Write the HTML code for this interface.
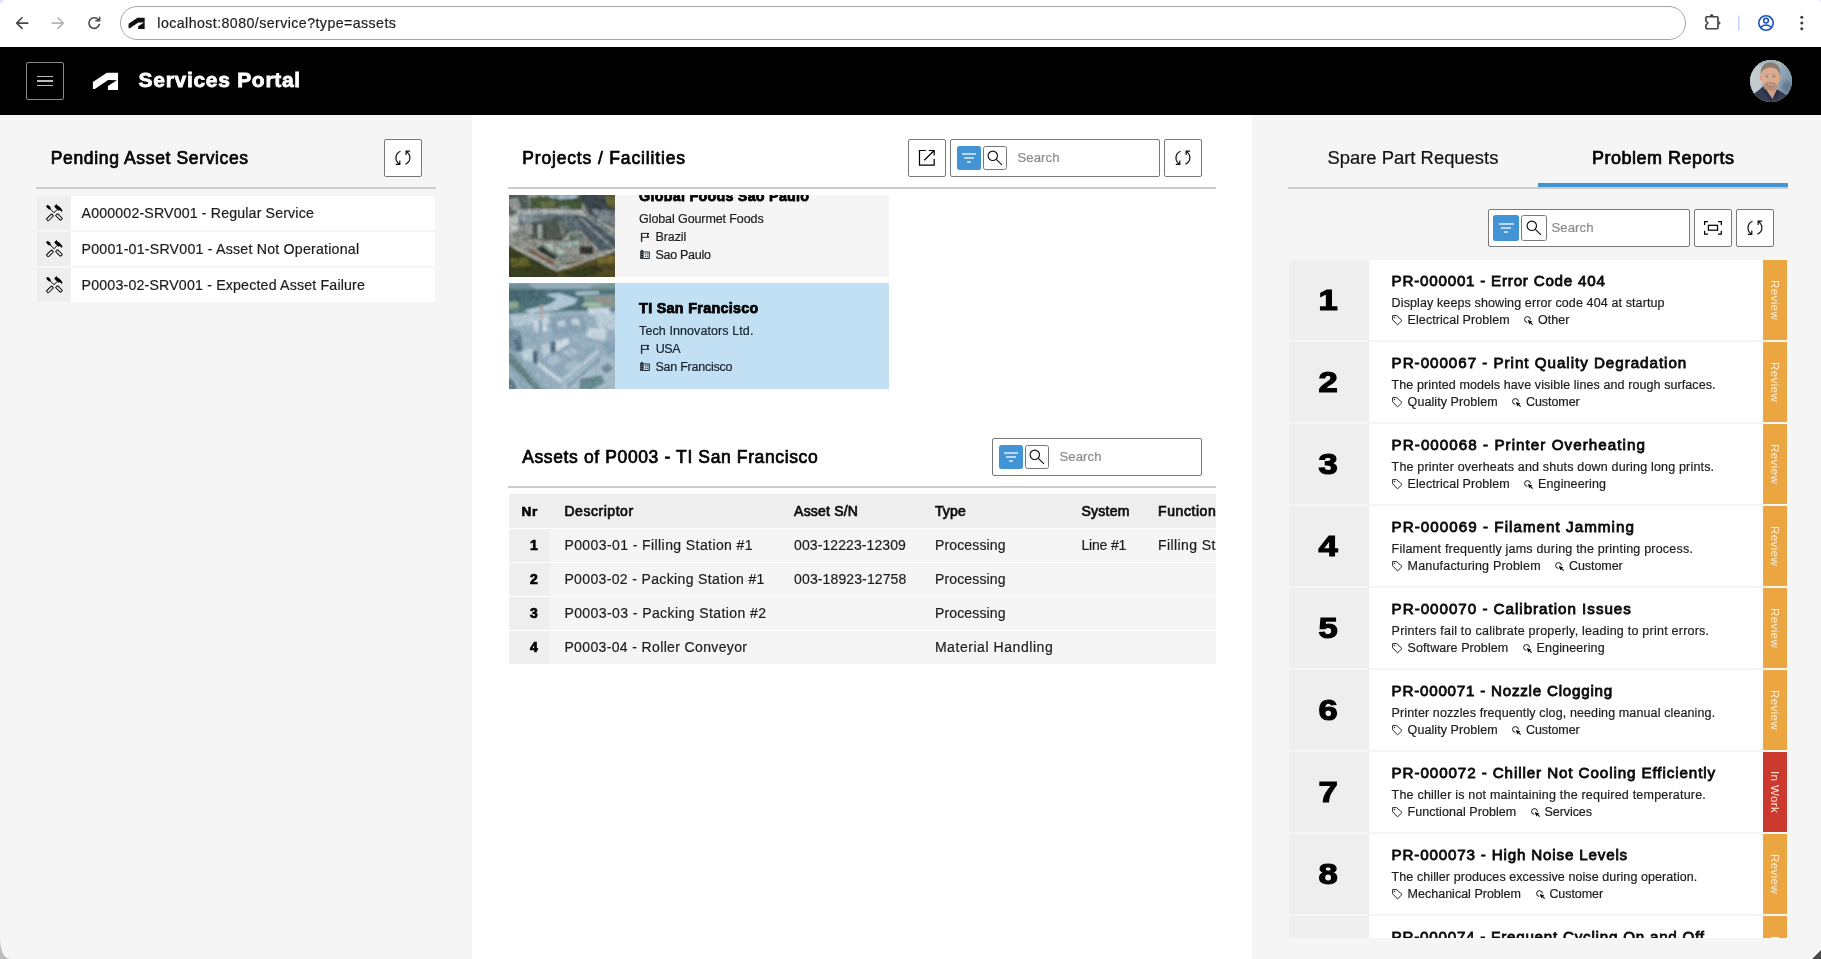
<!DOCTYPE html>
<html lang="en">
<head>
<meta charset="utf-8">
<title>Services Portal</title>
<style>
*{box-sizing:border-box;margin:0;padding:0}
html,body{width:1821px;height:959px;overflow:hidden;background:#f5f5f5;font-family:"Liberation Sans",sans-serif;color:#111}
.abs{position:absolute}
.t{position:absolute;white-space:nowrap}
.clip{position:absolute;left:0;top:0;width:1821px;height:959px}
#chrome{position:absolute;left:0;top:0;width:1821px;height:47px;background:#fff}
#urlbar{position:absolute;left:120px;top:6px;width:1566px;height:34px;border:1px solid #a6a6a6;border-radius:17px;background:#fff}
#hdr{position:absolute;left:0;top:47px;width:1821px;height:68px;background:#000}
#burger{position:absolute;left:26px;top:62px;width:38px;height:38px;border:1px solid #8a8a8a;border-radius:2px}
#burger i{position:absolute;left:10px;width:16px;height:1.400px;background:#bcbcbc}
#left{position:absolute;left:0;top:115px;width:472px;height:844px;background:#f5f5f5}
#mid{position:absolute;left:472px;top:115px;width:780px;height:844px;background:#fff}
#right{position:absolute;left:1252px;top:115px;width:569px;height:844px;background:#f5f5f5}
.sep{position:absolute;height:2px;background:#cbcbcb}
.btn{position:absolute;width:38px;height:38px;border:1px solid #787878;border-radius:2px;background:#fff}
.btn svg{position:absolute;left:-1px;top:-1px}
.sbox{position:absolute;height:38px;border:1px solid #787878;border-radius:2px;background:#fff}
.fb{position:absolute;background:#4394d5;border-radius:2.500px}
.fb i{position:absolute;height:1.600px;background:#b9d7ef}
.mb{position:absolute;background:#fff;border:1px solid #777;border-radius:2.500px}
.mb svg{position:absolute;left:-1px;top:-1px}
.lrow{position:absolute;left:37px;width:398px;height:34px;background:#fff}
.lrow b{position:absolute;left:0;top:0;width:34px;height:34px;background:#eee}
.lrow svg{position:absolute;left:8.800px;top:8px}
.vt{writing-mode:vertical-rl;text-align:center;font-size:11.500px;line-height:24px;color:#fdf0dc;letter-spacing:.4px}
</style>
</head>
<body>
<div id="root" style="position:absolute;left:0;top:0;width:1821px;height:959px;will-change:transform">
<!-- browser chrome -->
<div id="chrome">
  <svg class="abs" style="left:0;top:0" width="120" height="46" viewBox="0 0 120 46" fill="none" stroke-linecap="round" stroke-linejoin="round">
    <path d="M27.800 23.100H16.800M22 17.800l-5.300 5.300 5.300 5.300" stroke="#474747" stroke-width="1.600"/>
    <path d="M52.200 23.100H63.200M58 17.800l5.300 5.300-5.300 5.300" stroke="#b4b4b4" stroke-width="1.600"/>
    <path d="M98.600 20a5.300 5.300 0 1 0 .7 4.600" stroke="#474747" stroke-width="1.600"/>
    <path d="M99.600 17.200v3.600h-3.600" stroke="#474747" stroke-width="1.600"/>
  </svg>
  <div id="urlbar"></div>
  <svg class="abs" style="left:128.400px;top:16.600px" width="17.600" height="12.800" viewBox="92 71.500 27.500 20"><path d="M92.900 82.100 106.800 72.800H118.050V90.100H107.900V86L117 80.200 108.200 80.100 94.800 89.100H92.900Z" fill="#111"/></svg>
  <svg class="abs" style="left:1696px;top:6px" width="125" height="34" viewBox="0 0 125 34" fill="none">
    <path d="M10.850 10.750H21.050a.9.9 0 0 1 .9.9V21.850a.9.9 0 0 1-.9.9H10.850a.9.9 0 0 1-.9-.9V19L11.900 17 9.950 15V11.650a.9.9 0 0 1 .9-.9z" stroke="#444" stroke-width="1.700" stroke-linejoin="round"/><path d="M13.600 10.200Q15.700 6 17.800 10.200ZM22.700 15Q26.400 17 22.700 19Z" fill="#444"/>
    <path d="M42.800 9.500v15" stroke="#c6d4f5" stroke-width="1.600"/>
    <circle cx="70" cy="17" r="7.200" stroke="#1a4fc4" stroke-width="1.600"/>
    <circle cx="70" cy="14.600" r="2.400" stroke="#1a4fc4" stroke-width="1.500"/>
    <path d="M64.800 21.600c1.400-2 3.100-2.700 5.200-2.700s3.800.7 5.200 2.700" stroke="#1a4fc4" stroke-width="1.500"/>
    <circle cx="105.800" cy="11.200" r="1.500" fill="#3c3c3c"/><circle cx="105.800" cy="17" r="1.500" fill="#3c3c3c"/><circle cx="105.800" cy="22.800" r="1.500" fill="#3c3c3c"/>
  </svg>
</div>

<!-- app header -->
<div id="hdr"></div>
<div id="burger"><i style="top:12.500px"></i><i style="top:17.300px"></i><i style="top:22.100px"></i></div>
<svg class="abs" style="left:90px;top:70px" width="32" height="24" viewBox="90 70 32 24"><path d="M92.900 82.100 106.800 72.800H118.050V90.100H107.900V86L117 80.200 108.200 80.100 94.800 89.100H92.900Z" fill="#fff"/></svg>
<div id="avatar" class="abs" style="left:1750px;top:60px;width:42px;height:42px;border-radius:50%;overflow:hidden;background:#9fb0b8">
  <svg width="42" height="42" viewBox="0 0 42 42">
    <defs>
      <linearGradient id="avbg" x1="0" y1="0" x2="1" y2=".25"><stop offset="0" stop-color="#c4cccf"/><stop offset=".35" stop-color="#c2cbce"/><stop offset=".7" stop-color="#96abb9"/><stop offset="1" stop-color="#8299ab"/></linearGradient>
      <filter id="avblur" x="-10%" y="-10%" width="120%" height="120%"><feGaussianBlur stdDeviation=".65"/></filter>
      <filter id="avblur2" x="-30%" y="-30%" width="160%" height="160%"><feGaussianBlur stdDeviation="2.200"/></filter>
    </defs>
    <rect width="42" height="42" fill="url(#avbg)"/>
    <ellipse cx="21" cy="1" rx="20" ry="5" fill="#a3b8ba" filter="url(#avblur2)"/>
    <ellipse cx="37" cy="27" rx="5.500" ry="6.500" fill="#63798f" filter="url(#avblur2)"/>
    <g filter="url(#avblur)">
      <path d="M2 35.500C6 32 10 29.500 13.500 26L22 38 27 29.500C31 32 35.500 34 39 36.500L42 43H0Z" fill="#343c52"/>
      <path d="M13.800 25.500 22.300 39 27.200 29 26 22H14Z" fill="#cf9f85"/>
      <path d="M13.500 26 22 38.500 20 40 11 28.500ZM27 29.500 23.500 37 26 39 30.500 31.500Z" fill="#2b3246"/>
      <ellipse cx="10.900" cy="17.800" rx="1.300" ry="2.500" fill="#cc9a80"/><ellipse cx="29.800" cy="17.800" rx="1.300" ry="2.500" fill="#cc9a80"/>
      <ellipse cx="20.300" cy="17.600" rx="9.200" ry="12.300" fill="#dcab8e"/>
      <path d="M10.800 15C10 6.500 15 2.300 20.500 2.300 26 2.300 31 6.500 29.900 15 28.600 9.800 25.500 7.600 20.500 7.600 15.500 7.600 12.300 9.800 10.800 15Z" fill="#8a7b6e"/>
      <ellipse cx="20.300" cy="26.400" rx="7.200" ry="4.400" fill="#b58b75" opacity=".85"/>
      <path d="M16.600 23.600Q20.500 25 24.800 23.400 23.500 26.600 20.700 26.700 17.800 26.600 16.600 23.600Z" fill="#8d5f52"/>
      <path d="M17.600 24.200Q20.600 25.100 23.800 24.100L23.300 25.200Q20.600 26 18.100 25.200Z" fill="#f3e9e4"/>
      <ellipse cx="16.900" cy="16.700" rx="1.300" ry=".7" fill="#6a7488"/><ellipse cx="24" cy="16.700" rx="1.300" ry=".7" fill="#6a7488"/>
      <path d="M14.800 15.200Q17 14.200 19 15.200M22 15.200Q24 14.200 26.200 15.200" stroke="#a58672" stroke-width=".7" fill="none"/>
    </g>
  </svg>
</div>

<!-- panels -->
<div id="left"></div>
<div id="mid"></div>
<div id="right"></div>

<!-- shared icon defs -->
<svg width="0" height="0" style="position:absolute">
  <defs>
    <g id="i-refresh" fill="none" stroke="#111" stroke-width="1.200"><path d="M16.500 12.300C13.500 13.600 12 16 12 19c0 2.500 1.400 4.700 3.600 6.200M11.800 25.400h4v-3.800M21.400 25.300c3-1.300 4.500-3.700 4.500-6.700 0-2.500-1.400-4.700-3.600-6.200M26.100 12.100h-4v3.900"/></g>
    <g id="i-mag" fill="none" stroke="#111" stroke-width="1.150"><circle cx="9.800" cy="9.800" r="4.700"/><path d="M13.300 13.400 19 18.800"/></g>
    <g id="i-tools">
      <g transform="rotate(45 2.600 3.300)"><ellipse cx="2.600" cy="3.300" rx="2.700" ry="1.350" fill="#000"/></g>
      <path d="M4 4.700 7.900 8.600M11.200 5.500 7.600 9.100" stroke="#000" stroke-width="1" fill="none"/>
      <g transform="rotate(-45 3.900 13.400)"><rect x="0.200" y="12" width="7.400" height="2.800" rx=".7" fill="none" stroke="#000" stroke-width="1"/></g>
      <g transform="rotate(45 13 13)"><rect x="9.500" y="11.600" width="7" height="2.800" rx=".7" fill="none" stroke="#000" stroke-width="1"/></g>
      <path d="M8.200 2.300 10.700 0 11.300 1.500 13.600 2.700 16.400 6.100 16 8 13.700 6.100 12.400 6.700 11.100 5.400 9.500 3.900Z" fill="#000"/>
    </g>
    <g id="i-flag" fill="none" stroke="#1c252c"><path d="M1.600 .9V9.900" stroke-width="1.400"/><path d="M1.600 1.400H8.700L7.500 3.400 8.700 5.300H1.600" stroke-width="1" stroke-linejoin="miter"/><path d="M7.200 1.400H8.700L7.600 3.400 8.700 5.300H7.200" fill="#1c252c" stroke-width=".6"/></g>
    <g id="i-bldg"><path d="M.2 10V2.300L2 .6 3.600 2.300V10Z" fill="#1c252c"/><path d="M3.600 3H9.300V9.500H3.600" fill="none" stroke="#1c252c" stroke-width="1"/><path d="M5 5h1.300M7 5h1.300M5 7.200h1.300M7 7.200h1.300" stroke="#1c252c" stroke-width="1.100"/><path d="M1.900 3v6.500" stroke="#dfe7ec" stroke-width=".7" stroke-dasharray="1 1"/></g>
  </defs>
</svg>

<!-- LEFT -->
<div class="btn" style="left:384px;top:139px"><svg width="38" height="38"><use href="#i-refresh"/></svg></div>
<div class="sep" style="left:36px;top:187px;width:400px"></div>
<div class="lrow" style="top:196px"><b></b><svg width="17" height="17" viewBox="0 0 17 17"><use href="#i-tools"/></svg></div>
<div class="lrow" style="top:232px"><b></b><svg width="17" height="17" viewBox="0 0 17 17"><use href="#i-tools"/></svg></div>
<div class="lrow" style="top:268px"><b></b><svg width="17" height="17" viewBox="0 0 17 17"><use href="#i-tools"/></svg></div>

<!-- MID -->
<div class="btn" style="left:908px;top:139px"><svg width="38" height="38" fill="none" stroke="#000" stroke-width="1.200"><path d="M17.800 11.500H11.500V26.200H26.200V19.900M20.800 11.500H26.200V16.600M26.200 11.500 16.200 21.300"/></svg></div>
<div class="sbox" style="left:950px;top:139px;width:210px"></div>
<div class="fb" style="left:957px;top:146px;width:24px;height:24px"><i style="left:5px;top:7.400px;width:14px"></i><i style="left:7.100px;top:11.300px;width:9.900px"></i><i style="left:10.100px;top:15.100px;width:3.700px"></i></div>
<div class="mb" style="left:983px;top:146px;width:24px;height:24px"><svg width="24" height="24"><use href="#i-mag"/></svg></div>
<div class="btn" style="left:1164px;top:139px"><svg width="38" height="38"><use href="#i-refresh"/></svg></div>
<div class="sep" style="left:508px;top:187px;width:708px"></div>

<div class="clip" style="clip-path:inset(195px 0 0 0)">
  <!-- tile 1 -->
  <div class="abs" style="left:509px;top:171px;width:380px;height:106px;background:#f5f5f5"></div>
  <div class="abs" id="img1" style="left:509px;top:171px;width:106px;height:106px;overflow:hidden"><svg width="106" height="106" viewBox="0 0 106 106">
<defs><filter id="b1" x="-5%" y="-5%" width="110%" height="110%"><feGaussianBlur stdDeviation=".8"/></filter>
<filter id="n1" x="0" y="0" width="100%" height="100%"><feTurbulence type="fractalNoise" baseFrequency=".18" numOctaves="2" seed="3" result="n"/><feColorMatrix in="n" type="matrix" values="0 0 0 0 0  0 0 0 0 0  0 0 0 0 0  1.2 1.2 1.2 0 -1.450"/></filter></defs>
<rect width="106" height="106" fill="#979a93"/>
<g filter="url(#b1)">
<path d="M-2 20H32L31 36 12 40-2 44Z" fill="#5a6662"/>
<path d="M18 24 29 24 30 34 22 35Z" fill="#b6b6b1"/>
<path d="M0 28 8 27 13 38 2 40Z" fill="#9ea29f"/>
<path d="M20 26H74L72 39 24 41Z" fill="#4c5b3e"/>
<path d="M30 32 46 30 48 36 32 37Z" fill="#6c784c"/>
<ellipse cx="55" cy="25.800" rx="14" ry="2.400" fill="#a3c3d5"/>
<ellipse cx="55" cy="36.500" rx="5" ry="1.100" fill="#90a8b2"/>
<path d="M68 22H108V56L94 52 80 42Z" fill="#3f4c51"/>
<path d="M82 38 108 40V55L92 51Z" fill="#7c898f"/>
<path d="M95.500 24 108 25V38L99 36Z" fill="#6b6a3a"/>
<path d="M8 39 40 37.500 73 39 80 46 8 47Z" fill="#b1b7b5"/>
<path d="M-2 46 9 45 9 60-2 61Z" fill="#c3c7c5"/>
<path d="M8 44 46 42.500 47 52 10 53Z" fill="#7f9098"/>
<path d="M14 44 16 52M22 44 23 52M33 43 34 51" stroke="#b9c3c6" stroke-width="1.400" fill="none"/>
<path d="M28 44 69 43 72 60 40 60Z" fill="#64747a"/>
<path d="M68 45 82 45 108 66V78L92 80 74 62Z" fill="#53626a"/>
<path d="M71 47 104 77M79 46 108 68M89 49 108 61" stroke="#b6bfc0" stroke-width="1.100" fill="none"/>
<path d="M20 52 50 48 61 60 52 70 22 68Z" fill="#565c58"/>
<rect x="29" y="53.500" width="4" height="13.500" fill="#a7b5b0"/><rect x="21" y="53.500" width="2.800" height="9.500" fill="#a9b5b2"/>
<path d="M51 50 54 66M57 51 55 64" stroke="#a3a8a3" stroke-width="1" fill="none"/>
<path d="M10 58 20 56 22 68 12 66Z" fill="#8b8f88"/>
<path d="M60 62 72 62 76 70 62 72Z" fill="#6e7a76"/>
<path d="M27.500 78 36 73 50 82 46 89Z" fill="#2f3533"/>
<path d="M34.500 74 42 71 57.500 81V86.500L52 88 34.500 77Z" fill="#82978b"/>
<path d="M34.500 74 42 71 57.500 81 51 84Z" fill="#afbdb3"/>
<path d="M59 70 69 69.500 70 75 60 76Z" fill="#a7bfb6"/>
<path d="M50.500 70 57 70 57.500 75.500 51 75.500Z" fill="#8fa69b"/>
<path d="M70.500 76 84 75.500 84 83 71 83Z" fill="#393935"/>
<path d="M19 80 22 79 46 92 44 94Z" fill="#7b5637"/>
<path d="M56 92 76 88 77 90 57 94Z" fill="#6b5a44"/>
<path d="M-2 74 10 80 47 100V108H-2Z" fill="#3a4223"/>
<path d="M1 87 18 86 22 95 3 96Z" fill="#66662f"/>
<path d="M46 108 48 100 108 80V108Z" fill="#574f27"/>
<path d="M52 102 84 94 96 100 70 108Z" fill="#384020"/>
<path d="M87 85 106 84 106 92 90 92Z" fill="#7c6f34"/>
<path d="M-2 71.500 14 81 47 98.600 62 95 108 78" stroke="#b5b7af" stroke-width="2.300" fill="none"/>
</g>
<rect width="106" height="106" filter="url(#n1)" fill="#000" opacity=".22"/>
</svg></div>
  <!-- tile 2 -->
  <div class="abs" style="left:509px;top:283px;width:380px;height:106px;background:#c2e0f3"></div>
  <div class="abs" id="img2" style="left:509px;top:283px;width:106px;height:106px;overflow:hidden"><svg width="106" height="106" viewBox="0 0 106 106">
<defs><filter id="b2" x="-5%" y="-5%" width="110%" height="110%"><feGaussianBlur stdDeviation=".8"/></filter>
<filter id="n2" x="0" y="0" width="100%" height="100%"><feTurbulence type="fractalNoise" baseFrequency=".22" numOctaves="2" seed="8" result="n"/><feColorMatrix in="n" type="matrix" values="0 0 0 0 .9  0 0 0 0 .94  0 0 0 0 .97  1.2 1.2 1.2 0 -1.550"/></filter>
<filter id="n3" x="0" y="0" width="100%" height="100%"><feTurbulence type="fractalNoise" baseFrequency=".2" numOctaves="2" seed="21" result="n"/><feColorMatrix in="n" type="matrix" values="0 0 0 0 .22  0 0 0 0 .35  0 0 0 0 .45  1.2 1.2 1.2 0 -1.500"/></filter></defs>
<rect width="106" height="106" fill="#93abbc"/>
<g filter="url(#b2)">
<rect x="-2" y="-2" width="110" height="9" fill="#94adbb"/>
<path d="M-2 1 18 0 27 6-2 8Z" fill="#6f8d96"/><path d="M80 3 108-1V8L86 8Z" fill="#7a9a9a"/>
<path d="M-2 6H108V30L60 30-2 32Z" fill="#4a6e74"/>
<path d="M-2 8 30 7 38 14 10 20-2 20Z" fill="#40646a"/>
<path d="M-2 19 9 18.500 10 25-2 26Z" fill="#8aa88c"/>
<path d="M36 11.500 50 10 68.500 16 66 20.500 48 27 20 30.500 16 27 40 21.500 48 16Z" fill="#b5cad7"/>
<path d="M66 8.500 90 8 90 11 68 12.500Z" fill="#a8bfcc"/>
<path d="M74 12 108 11V26L78 26Z" fill="#7d9590"/>
<path d="M86 14 104 14.500 104 21 88 20Z" fill="#94908a"/>
<path d="M75.500 19.500 92.700 20 92 23.500 72 23Z" fill="#a6c4a4"/>
<path d="M-2 31 60 28 108 28V108H-2Z" fill="#95adbd"/>
<path d="M2 32 40 30 44 41 4 43Z" fill="#b3c6d2"/>
<path d="M79 25 100 24.500 102 31 80 32Z" fill="#cbd9e3"/>
<path d="M85 32 108 31V46L90 47Z" fill="#bccdd8"/>
<path d="M76 44 98 47 96 58 78 54Z" fill="#c6d5df"/>
<path d="M31 22 34 22 34 37 31 37Z" fill="#b09a9a"/>
<path d="M25 36 38 35 38.500 48 25 49Z" fill="#c9d6df"/>
<path d="M30 37 33 37 33 49 30 49Z" fill="#7d96a8"/>
<path d="M40 34 72 32 80 48 44 55Z" fill="#869fb1"/>
<path d="M48 38 56 37 57 43 49 44Z" fill="#b9cad5"/><path d="M62 36 70 36 71 42 63 42Z" fill="#c2d1db"/>
<path d="M-2 44 12 48 14 68-2 70Z" fill="#6b8799"/>
<path d="M5 56 12 54 13.500 67 7 69Z" fill="#4e6a7d"/>
<path d="M14 48 30 50 30 60 16 60Z" fill="#8da5b6"/>
<path d="M46.800 58 60 55.500 60.500 68 47 70.500Z" fill="#d3dfe7"/>
<path d="M40.700 59.500 46.800 58 47 70.500 41 70Z" fill="#4f6b7f"/>
<path d="M33 62 41 60 41.500 72 34 74Z" fill="#bfcfd9"/>
<path d="M13 68 24 65.500 28.600 68 28.600 80 14 77Z" fill="#c1d0da"/>
<path d="M23.800 68 28.600 67 29 82 24 80Z" fill="#3f5c70"/>
<path d="M28.600 78.500 60 61 89 66.300 52.200 96Z" fill="#8ea6b7"/>
<path d="M36 78 46 72 54 76 44 83ZM52 70 62 65 72 68 62 74ZM54 84 64 77 72 80 62 88Z" fill="#a9bdca"/>
<path d="M28.600 78.500 52.200 96 89 66.300 89.500 70 52.200 100.500 28.600 82.500Z" fill="#cddae3"/>
<path d="M52.200 96 89 66.300 89.500 70 52.200 100.500Z" fill="#b4c6d2"/>
<path d="M-2 64 8 70 40 108H-2Z" fill="#8ba3b2"/>
<path d="M-2 70 3 71 34 108 27 108-2 78Z" fill="#5f7d80"/>
<path d="M-2 84 12 108" stroke="#a9bcc8" stroke-width="1.500" fill="none"/>
<path d="M54 102 90 72 108 76V108H48Z" fill="#a5b9c6"/>
<path d="M58 104 92 75" stroke="#7d97a7" stroke-width="2.600" fill="none"/>
<path d="M92 84 100 80 104 86 96 91Z" fill="#6a8494"/>
<path d="M94 60 106 58 106 70 98 72Z" fill="#7f9db3"/>
<path d="M71 96 92 92 96 100 80 108 70 106Z" fill="#5f8288"/>
<path d="M-2 96 4 96 8 108H-2Z" fill="#4f6f78"/>
</g>
<rect y="26" width="106" height="80" filter="url(#n2)" opacity=".16"/>
<rect y="6" width="106" height="100" filter="url(#n3)" opacity=".3"/>
</svg></div>
  <svg class="abs" style="left:640px;top:232.300px" width="10" height="11" viewBox="0 0 10 11"><use href="#i-flag"/></svg>
  <svg class="abs" style="left:640px;top:249.400px" width="10" height="11" viewBox="0 0 10 11"><use href="#i-bldg"/></svg>
  <svg class="abs" style="left:640px;top:344px" width="10" height="11" viewBox="0 0 10 11"><use href="#i-flag"/></svg>
  <svg class="abs" style="left:640px;top:361.200px" width="10" height="11" viewBox="0 0 10 11"><use href="#i-bldg"/></svg>
<div class="t" style="left:639.1px;top:187.00px;font-size:14.3px;line-height:19px;font-weight:bold;letter-spacing:0.265px;color:#000;-webkit-text-stroke:.75px #000;">Global Foods Sao Paulo</div>
<div class="t" style="left:639.1px;top:211.00px;font-size:12.5px;line-height:16px;letter-spacing:-0.098px;color:#1c1c1c;-webkit-text-stroke:.2px #1c1c1c;">Global Gourmet Foods</div>
<div class="t" style="left:655.5px;top:229.00px;font-size:12.5px;line-height:16px;letter-spacing:-0.093px;color:#1c1c1c;-webkit-text-stroke:.2px #1c1c1c;">Brazil</div>
<div class="t" style="left:655.5px;top:247.00px;font-size:12.5px;line-height:16px;letter-spacing:-0.286px;color:#1c1c1c;-webkit-text-stroke:.2px #1c1c1c;">Sao Paulo</div>
<div class="t" style="left:639.1px;top:299.00px;font-size:14.3px;line-height:19px;font-weight:bold;letter-spacing:0.319px;color:#000;-webkit-text-stroke:.75px #000;">TI San Francisco</div>
<div class="t" style="left:639.1px;top:323.00px;font-size:12.5px;line-height:16px;letter-spacing:0.091px;color:#16222b;-webkit-text-stroke:.2px #16222b;">Tech Innovators Ltd.</div>
<div class="t" style="left:655.8px;top:341.00px;font-size:12.5px;line-height:16px;letter-spacing:-0.500px;color:#16222b;-webkit-text-stroke:.2px #16222b;">USA</div>
<div class="t" style="left:655.5px;top:359.00px;font-size:12.5px;line-height:16px;letter-spacing:-0.251px;color:#16222b;-webkit-text-stroke:.2px #16222b;">San Francisco</div>
</div>

<div class="sbox" style="left:992px;top:438px;width:210px"></div>
<div class="fb" style="left:999px;top:445px;width:24px;height:24px"><i style="left:5px;top:7.400px;width:14px"></i><i style="left:7.100px;top:11.300px;width:9.900px"></i><i style="left:10.100px;top:15.100px;width:3.700px"></i></div>
<div class="mb" style="left:1025px;top:445px;width:24px;height:24px"><svg width="24" height="24"><use href="#i-mag"/></svg></div>
<div class="sep" style="left:508px;top:486px;width:708px"></div>

<div class="clip" style="clip-path:inset(0 605px 0 0)">
  <div class="abs" style="left:509px;top:494px;width:707px;height:34px;background:#eee"></div>
  <div class="abs" style="left:509px;top:529px;width:707px;height:33px;background:#f5f5f5"></div>
  <div class="abs" style="left:509px;top:563px;width:707px;height:33px;background:#f5f5f5"></div>
  <div class="abs" style="left:509px;top:597px;width:707px;height:33px;background:#f5f5f5"></div>
  <div class="abs" style="left:509px;top:631px;width:707px;height:33px;background:#f5f5f5"></div>
  <div class="abs" style="left:509px;top:529px;width:41px;height:33px;background:#eee"></div>
  <div class="abs" style="left:509px;top:563px;width:41px;height:33px;background:#eee"></div>
  <div class="abs" style="left:509px;top:597px;width:41px;height:33px;background:#eee"></div>
  <div class="abs" style="left:509px;top:631px;width:41px;height:33px;background:#eee"></div>
<div class="t" style="left:521.4px;top:503.00px;font-size:13.6px;line-height:18px;font-weight:bold;letter-spacing:0.691px;color:#000;-webkit-text-stroke:.6px #000;">Nr</div>
<div class="t" style="left:564.4px;top:502.00px;font-size:14px;line-height:18px;letter-spacing:0.545px;color:#0c0c0c;-webkit-text-stroke:.7px #0c0c0c;">Descriptor</div>
<div class="t" style="left:794.1px;top:502.00px;font-size:14px;line-height:18px;letter-spacing:0.194px;color:#0c0c0c;-webkit-text-stroke:.7px #0c0c0c;">Asset S/N</div>
<div class="t" style="left:934.9px;top:502.00px;font-size:14px;line-height:18px;letter-spacing:0.147px;color:#0c0c0c;-webkit-text-stroke:.7px #0c0c0c;">Type</div>
<div class="t" style="left:1081.4px;top:502.00px;font-size:14px;line-height:18px;letter-spacing:0.263px;color:#0c0c0c;-webkit-text-stroke:.7px #0c0c0c;">System</div>
<div class="t" style="left:1158.1px;top:502.00px;font-size:14px;line-height:18px;letter-spacing:0.557px;color:#0c0c0c;-webkit-text-stroke:.7px #0c0c0c;">Function</div>
<div class="t" style="right:1283.2px;top:536.00px;font-size:14px;line-height:18px;font-weight:bold;color:#000;-webkit-text-stroke:.7px #000;">1</div>
<div class="t" style="left:564.4px;top:536.00px;font-size:14px;line-height:18px;letter-spacing:0.412px;color:#1c1c1c;-webkit-text-stroke:.2px #1c1c1c;">P0003-01 - Filling Station #1</div>
<div class="t" style="left:794.1px;top:536.00px;font-size:14px;line-height:18px;letter-spacing:0.090px;color:#1c1c1c;-webkit-text-stroke:.2px #1c1c1c;">003-12223-12309</div>
<div class="t" style="left:934.9px;top:536.00px;font-size:14px;line-height:18px;letter-spacing:0.159px;color:#1c1c1c;-webkit-text-stroke:.2px #1c1c1c;">Processing</div>
<div class="t" style="left:1081.4px;top:536.00px;font-size:14px;line-height:18px;letter-spacing:-0.156px;color:#1c1c1c;-webkit-text-stroke:.2px #1c1c1c;">Line #1</div>
<div class="t" style="left:1158.1px;top:536.00px;font-size:14px;line-height:18px;letter-spacing:0.400px;color:#1c1c1c;-webkit-text-stroke:.2px #1c1c1c;">Filling Station</div>
<div class="t" style="right:1283.2px;top:570.00px;font-size:14px;line-height:18px;font-weight:bold;color:#000;-webkit-text-stroke:.7px #000;">2</div>
<div class="t" style="left:564.4px;top:570.00px;font-size:14px;line-height:18px;letter-spacing:0.360px;color:#1c1c1c;-webkit-text-stroke:.2px #1c1c1c;">P0003-02 - Packing Station #1</div>
<div class="t" style="left:794.1px;top:570.00px;font-size:14px;line-height:18px;letter-spacing:0.118px;color:#1c1c1c;-webkit-text-stroke:.2px #1c1c1c;">003-18923-12758</div>
<div class="t" style="left:934.9px;top:570.00px;font-size:14px;line-height:18px;letter-spacing:0.159px;color:#1c1c1c;-webkit-text-stroke:.2px #1c1c1c;">Processing</div>
<div class="t" style="right:1283.2px;top:604.00px;font-size:14px;line-height:18px;font-weight:bold;color:#000;-webkit-text-stroke:.7px #000;">3</div>
<div class="t" style="left:564.4px;top:604.00px;font-size:14px;line-height:18px;letter-spacing:0.418px;color:#1c1c1c;-webkit-text-stroke:.2px #1c1c1c;">P0003-03 - Packing Station #2</div>
<div class="t" style="left:934.9px;top:604.00px;font-size:14px;line-height:18px;letter-spacing:0.159px;color:#1c1c1c;-webkit-text-stroke:.2px #1c1c1c;">Processing</div>
<div class="t" style="right:1283.2px;top:638.00px;font-size:14px;line-height:18px;font-weight:bold;color:#000;-webkit-text-stroke:.7px #000;">4</div>
<div class="t" style="left:564.4px;top:638.00px;font-size:14px;line-height:18px;letter-spacing:0.363px;color:#1c1c1c;-webkit-text-stroke:.2px #1c1c1c;">P0003-04 - Roller Conveyor</div>
<div class="t" style="left:934.9px;top:638.00px;font-size:14px;line-height:18px;letter-spacing:0.553px;color:#1c1c1c;-webkit-text-stroke:.2px #1c1c1c;">Material Handling</div>
</div>

<!-- RIGHT -->
<div class="sep" style="left:1288px;top:187px;width:500px"></div>
<div class="abs" style="left:1538px;top:183px;width:250px;height:4px;background:#4394d5"></div>
<div class="sbox" style="left:1488px;top:209px;width:202px"></div>
<div class="fb" style="left:1493px;top:215px;width:26px;height:26px"><i style="left:5.500px;top:8px;width:15px"></i><i style="left:7.800px;top:12.200px;width:10.400px"></i><i style="left:11px;top:16.400px;width:4px"></i></div>
<div class="mb" style="left:1521px;top:215px;width:26px;height:26px"><svg width="26" height="26" viewBox="-1 -1 26 26"><use href="#i-mag"/></svg></div>
<div class="btn" style="left:1694px;top:209px"><svg width="38" height="38" fill="none" stroke="#000" stroke-width="1.250"><path d="M10.600 16V12.700H14M24 12.700H27.300V16M10.600 21.700V25H14M24 25H27.300V21.700"/><rect x="14.400" y="16.300" width="9.100" height="4.900"/></svg></div>
<div class="btn" style="left:1736px;top:209px"><svg width="38" height="38"><use href="#i-refresh"/></svg></div>

<div class="clip" style="clip-path:inset(260px 0 21px 0)">
<div class="abs" style="left:1289px;top:260px;width:80px;height:80px;background:#eee"></div>
<div class="abs" style="left:1369px;top:260px;width:394px;height:80px;background:#fff"></div>
<div class="abs" style="left:1763px;top:260px;width:24px;height:80px;background:#eba641"></div>
<svg class="abs" style="left:1391.6px;top:314.6px" width="11" height="11" viewBox="0 0 11 11" fill="none" stroke="#1c1c1c" stroke-width=".95" stroke-linejoin="round"><path d="M.6.6H4.700L10 5.500 5.600 9.900.6 4.800Z"/><circle cx="2.600" cy="2.600" r=".35" fill="#1c1c1c"/></svg>
<svg class="abs" style="left:1524.4px;top:316.3px" width="10" height="10" viewBox="0 0 10 10" fill="none"><path d="M3.300 6.400A2.900 2.900 0 1 1 6.400 3.600" stroke="#111" stroke-width="1"/><path d="M3.700 3.900 8.400 5.400 7 6.200 9 8.300 8.200 9 6.200 7 5.400 8.500Z" fill="#000"/></svg>
<div class="t vt" style="left:1763px;top:260px;width:24px;height:80px">Review</div>
<div class="abs" style="left:1289px;top:342px;width:80px;height:80px;background:#eee"></div>
<div class="abs" style="left:1369px;top:342px;width:394px;height:80px;background:#fff"></div>
<div class="abs" style="left:1763px;top:342px;width:24px;height:80px;background:#eba641"></div>
<svg class="abs" style="left:1391.6px;top:396.6px" width="11" height="11" viewBox="0 0 11 11" fill="none" stroke="#1c1c1c" stroke-width=".95" stroke-linejoin="round"><path d="M.6.6H4.700L10 5.500 5.600 9.900.6 4.800Z"/><circle cx="2.600" cy="2.600" r=".35" fill="#1c1c1c"/></svg>
<svg class="abs" style="left:1512.4px;top:398.3px" width="10" height="10" viewBox="0 0 10 10" fill="none"><path d="M3.300 6.400A2.900 2.900 0 1 1 6.400 3.600" stroke="#111" stroke-width="1"/><path d="M3.700 3.900 8.400 5.400 7 6.200 9 8.300 8.200 9 6.200 7 5.400 8.500Z" fill="#000"/></svg>
<div class="t vt" style="left:1763px;top:342px;width:24px;height:80px">Review</div>
<div class="abs" style="left:1289px;top:424px;width:80px;height:80px;background:#eee"></div>
<div class="abs" style="left:1369px;top:424px;width:394px;height:80px;background:#fff"></div>
<div class="abs" style="left:1763px;top:424px;width:24px;height:80px;background:#eba641"></div>
<svg class="abs" style="left:1391.6px;top:478.6px" width="11" height="11" viewBox="0 0 11 11" fill="none" stroke="#1c1c1c" stroke-width=".95" stroke-linejoin="round"><path d="M.6.6H4.700L10 5.500 5.600 9.900.6 4.800Z"/><circle cx="2.600" cy="2.600" r=".35" fill="#1c1c1c"/></svg>
<svg class="abs" style="left:1524.4px;top:480.3px" width="10" height="10" viewBox="0 0 10 10" fill="none"><path d="M3.300 6.400A2.900 2.900 0 1 1 6.400 3.600" stroke="#111" stroke-width="1"/><path d="M3.700 3.900 8.400 5.400 7 6.200 9 8.300 8.200 9 6.200 7 5.400 8.500Z" fill="#000"/></svg>
<div class="t vt" style="left:1763px;top:424px;width:24px;height:80px">Review</div>
<div class="abs" style="left:1289px;top:506px;width:80px;height:80px;background:#eee"></div>
<div class="abs" style="left:1369px;top:506px;width:394px;height:80px;background:#fff"></div>
<div class="abs" style="left:1763px;top:506px;width:24px;height:80px;background:#eba641"></div>
<svg class="abs" style="left:1391.6px;top:560.6px" width="11" height="11" viewBox="0 0 11 11" fill="none" stroke="#1c1c1c" stroke-width=".95" stroke-linejoin="round"><path d="M.6.6H4.700L10 5.500 5.600 9.900.6 4.800Z"/><circle cx="2.600" cy="2.600" r=".35" fill="#1c1c1c"/></svg>
<svg class="abs" style="left:1555.4px;top:562.3px" width="10" height="10" viewBox="0 0 10 10" fill="none"><path d="M3.300 6.400A2.900 2.900 0 1 1 6.400 3.600" stroke="#111" stroke-width="1"/><path d="M3.700 3.900 8.400 5.400 7 6.200 9 8.300 8.200 9 6.200 7 5.400 8.500Z" fill="#000"/></svg>
<div class="t vt" style="left:1763px;top:506px;width:24px;height:80px">Review</div>
<div class="abs" style="left:1289px;top:588px;width:80px;height:80px;background:#eee"></div>
<div class="abs" style="left:1369px;top:588px;width:394px;height:80px;background:#fff"></div>
<div class="abs" style="left:1763px;top:588px;width:24px;height:80px;background:#eba641"></div>
<svg class="abs" style="left:1391.6px;top:642.6px" width="11" height="11" viewBox="0 0 11 11" fill="none" stroke="#1c1c1c" stroke-width=".95" stroke-linejoin="round"><path d="M.6.6H4.700L10 5.500 5.600 9.900.6 4.800Z"/><circle cx="2.600" cy="2.600" r=".35" fill="#1c1c1c"/></svg>
<svg class="abs" style="left:1523.0px;top:644.3px" width="10" height="10" viewBox="0 0 10 10" fill="none"><path d="M3.300 6.400A2.900 2.900 0 1 1 6.400 3.600" stroke="#111" stroke-width="1"/><path d="M3.700 3.900 8.400 5.400 7 6.200 9 8.300 8.200 9 6.200 7 5.400 8.500Z" fill="#000"/></svg>
<div class="t vt" style="left:1763px;top:588px;width:24px;height:80px">Review</div>
<div class="abs" style="left:1289px;top:670px;width:80px;height:80px;background:#eee"></div>
<div class="abs" style="left:1369px;top:670px;width:394px;height:80px;background:#fff"></div>
<div class="abs" style="left:1763px;top:670px;width:24px;height:80px;background:#eba641"></div>
<svg class="abs" style="left:1391.6px;top:724.6px" width="11" height="11" viewBox="0 0 11 11" fill="none" stroke="#1c1c1c" stroke-width=".95" stroke-linejoin="round"><path d="M.6.6H4.700L10 5.500 5.600 9.900.6 4.800Z"/><circle cx="2.600" cy="2.600" r=".35" fill="#1c1c1c"/></svg>
<svg class="abs" style="left:1512.4px;top:726.3px" width="10" height="10" viewBox="0 0 10 10" fill="none"><path d="M3.300 6.400A2.900 2.900 0 1 1 6.400 3.600" stroke="#111" stroke-width="1"/><path d="M3.700 3.900 8.400 5.400 7 6.200 9 8.300 8.200 9 6.200 7 5.400 8.500Z" fill="#000"/></svg>
<div class="t vt" style="left:1763px;top:670px;width:24px;height:80px">Review</div>
<div class="abs" style="left:1289px;top:752px;width:80px;height:80px;background:#eee"></div>
<div class="abs" style="left:1369px;top:752px;width:394px;height:80px;background:#fff"></div>
<div class="abs" style="left:1763px;top:752px;width:24px;height:80px;background:#cc392e"></div>
<svg class="abs" style="left:1391.6px;top:806.6px" width="11" height="11" viewBox="0 0 11 11" fill="none" stroke="#1c1c1c" stroke-width=".95" stroke-linejoin="round"><path d="M.6.6H4.700L10 5.500 5.600 9.900.6 4.800Z"/><circle cx="2.600" cy="2.600" r=".35" fill="#1c1c1c"/></svg>
<svg class="abs" style="left:1531.0px;top:808.3px" width="10" height="10" viewBox="0 0 10 10" fill="none"><path d="M3.300 6.400A2.900 2.900 0 1 1 6.400 3.600" stroke="#111" stroke-width="1"/><path d="M3.700 3.900 8.400 5.400 7 6.200 9 8.300 8.200 9 6.200 7 5.400 8.500Z" fill="#000"/></svg>
<div class="t vt" style="left:1763px;top:752px;width:24px;height:80px">In Work</div>
<div class="abs" style="left:1289px;top:834px;width:80px;height:80px;background:#eee"></div>
<div class="abs" style="left:1369px;top:834px;width:394px;height:80px;background:#fff"></div>
<div class="abs" style="left:1763px;top:834px;width:24px;height:80px;background:#eba641"></div>
<svg class="abs" style="left:1391.6px;top:888.6px" width="11" height="11" viewBox="0 0 11 11" fill="none" stroke="#1c1c1c" stroke-width=".95" stroke-linejoin="round"><path d="M.6.6H4.700L10 5.500 5.600 9.900.6 4.800Z"/><circle cx="2.600" cy="2.600" r=".35" fill="#1c1c1c"/></svg>
<svg class="abs" style="left:1535.8px;top:890.3px" width="10" height="10" viewBox="0 0 10 10" fill="none"><path d="M3.300 6.400A2.900 2.900 0 1 1 6.400 3.600" stroke="#111" stroke-width="1"/><path d="M3.700 3.900 8.400 5.400 7 6.200 9 8.300 8.200 9 6.200 7 5.400 8.500Z" fill="#000"/></svg>
<div class="t vt" style="left:1763px;top:834px;width:24px;height:80px">Review</div>
<div class="abs" style="left:1289px;top:916px;width:80px;height:80px;background:#eee"></div>
<div class="abs" style="left:1369px;top:916px;width:394px;height:80px;background:#fff"></div>
<div class="abs" style="left:1763px;top:916px;width:24px;height:80px;background:#eba641"></div>
<svg class="abs" style="left:1391.6px;top:970.6px" width="11" height="11" viewBox="0 0 11 11" fill="none" stroke="#1c1c1c" stroke-width=".95" stroke-linejoin="round"><path d="M.6.6H4.700L10 5.500 5.600 9.900.6 4.800Z"/><circle cx="2.600" cy="2.600" r=".35" fill="#1c1c1c"/></svg>
<svg class="abs" style="left:1531.0px;top:972.3px" width="10" height="10" viewBox="0 0 10 10" fill="none"><path d="M3.300 6.400A2.900 2.900 0 1 1 6.400 3.600" stroke="#111" stroke-width="1"/><path d="M3.700 3.900 8.400 5.400 7 6.200 9 8.300 8.200 9 6.200 7 5.400 8.500Z" fill="#000"/></svg>
<div class="t vt" style="left:1763px;top:916px;width:24px;height:80px">Review</div>
<div class="t" style="top:280.00px;font-size:29.8px;line-height:39px;font-weight:bold;color:#000;-webkit-text-stroke:1.200px #000;width:80px;text-align:center;left:1288.300px;transform:scaleX(1.160);">1</div>
<div class="t" style="left:1391.6px;top:271.00px;font-size:15.2px;line-height:20px;letter-spacing:0.765px;color:#0a0a0a;-webkit-text-stroke:.8px #0a0a0a;">PR-000001 - Error Code 404</div>
<div class="t" style="left:1391.6px;top:295.00px;font-size:12.5px;line-height:16px;letter-spacing:0.119px;color:#1c1c1c;-webkit-text-stroke:.2px #1c1c1c;">Display keeps showing error code 404 at startup</div>
<div class="t" style="left:1407.6px;top:312.00px;font-size:12.5px;line-height:16px;letter-spacing:0.074px;color:#1c1c1c;-webkit-text-stroke:.2px #1c1c1c;">Electrical Problem</div>
<div class="t" style="left:1538.0px;top:312.00px;font-size:12.5px;line-height:16px;letter-spacing:0.034px;color:#1c1c1c;-webkit-text-stroke:.2px #1c1c1c;">Other</div>
<div class="t" style="top:362.00px;font-size:29.8px;line-height:39px;font-weight:bold;color:#000;-webkit-text-stroke:1.200px #000;width:80px;text-align:center;left:1288.300px;transform:scaleX(1.160);">2</div>
<div class="t" style="left:1391.6px;top:353.00px;font-size:15.2px;line-height:20px;letter-spacing:0.963px;color:#0a0a0a;-webkit-text-stroke:.8px #0a0a0a;">PR-000067 - Print Quality Degradation</div>
<div class="t" style="left:1391.6px;top:377.00px;font-size:12.5px;line-height:16px;letter-spacing:0.090px;color:#1c1c1c;-webkit-text-stroke:.2px #1c1c1c;">The printed models have visible lines and rough surfaces.</div>
<div class="t" style="left:1407.6px;top:394.00px;font-size:12.5px;line-height:16px;letter-spacing:0.076px;color:#1c1c1c;-webkit-text-stroke:.2px #1c1c1c;">Quality Problem</div>
<div class="t" style="left:1526.0px;top:394.00px;font-size:12.5px;line-height:16px;letter-spacing:-0.070px;color:#1c1c1c;-webkit-text-stroke:.2px #1c1c1c;">Customer</div>
<div class="t" style="top:444.00px;font-size:29.8px;line-height:39px;font-weight:bold;color:#000;-webkit-text-stroke:1.200px #000;width:80px;text-align:center;left:1288.300px;transform:scaleX(1.160);">3</div>
<div class="t" style="left:1391.6px;top:435.00px;font-size:15.2px;line-height:20px;letter-spacing:1.042px;color:#0a0a0a;-webkit-text-stroke:.8px #0a0a0a;">PR-000068 - Printer Overheating</div>
<div class="t" style="left:1391.6px;top:459.00px;font-size:12.5px;line-height:16px;letter-spacing:0.178px;color:#1c1c1c;-webkit-text-stroke:.2px #1c1c1c;">The printer overheats and shuts down during long prints.</div>
<div class="t" style="left:1407.6px;top:476.00px;font-size:12.5px;line-height:16px;letter-spacing:0.074px;color:#1c1c1c;-webkit-text-stroke:.2px #1c1c1c;">Electrical Problem</div>
<div class="t" style="left:1538.0px;top:476.00px;font-size:12.5px;line-height:16px;letter-spacing:0.128px;color:#1c1c1c;-webkit-text-stroke:.2px #1c1c1c;">Engineering</div>
<div class="t" style="top:526.00px;font-size:29.8px;line-height:39px;font-weight:bold;color:#000;-webkit-text-stroke:1.200px #000;width:80px;text-align:center;left:1288.300px;transform:scaleX(1.160);">4</div>
<div class="t" style="left:1391.6px;top:517.00px;font-size:15.2px;line-height:20px;letter-spacing:1.033px;color:#0a0a0a;-webkit-text-stroke:.8px #0a0a0a;">PR-000069 - Filament Jamming</div>
<div class="t" style="left:1391.6px;top:541.00px;font-size:12.5px;line-height:16px;letter-spacing:0.209px;color:#1c1c1c;-webkit-text-stroke:.2px #1c1c1c;">Filament frequently jams during the printing process.</div>
<div class="t" style="left:1407.6px;top:558.00px;font-size:12.5px;line-height:16px;letter-spacing:0.188px;color:#1c1c1c;-webkit-text-stroke:.2px #1c1c1c;">Manufacturing Problem</div>
<div class="t" style="left:1569.0px;top:558.00px;font-size:12.5px;line-height:16px;letter-spacing:-0.070px;color:#1c1c1c;-webkit-text-stroke:.2px #1c1c1c;">Customer</div>
<div class="t" style="top:608.00px;font-size:29.8px;line-height:39px;font-weight:bold;color:#000;-webkit-text-stroke:1.200px #000;width:80px;text-align:center;left:1288.300px;transform:scaleX(1.160);">5</div>
<div class="t" style="left:1391.6px;top:599.00px;font-size:15.2px;line-height:20px;letter-spacing:0.974px;color:#0a0a0a;-webkit-text-stroke:.8px #0a0a0a;">PR-000070 - Calibration Issues</div>
<div class="t" style="left:1391.6px;top:623.00px;font-size:12.5px;line-height:16px;letter-spacing:0.235px;color:#1c1c1c;-webkit-text-stroke:.2px #1c1c1c;">Printers fail to calibrate properly, leading to print errors.</div>
<div class="t" style="left:1407.6px;top:640.00px;font-size:12.5px;line-height:16px;letter-spacing:0.083px;color:#1c1c1c;-webkit-text-stroke:.2px #1c1c1c;">Software Problem</div>
<div class="t" style="left:1536.6px;top:640.00px;font-size:12.5px;line-height:16px;letter-spacing:0.128px;color:#1c1c1c;-webkit-text-stroke:.2px #1c1c1c;">Engineering</div>
<div class="t" style="top:690.00px;font-size:29.8px;line-height:39px;font-weight:bold;color:#000;-webkit-text-stroke:1.200px #000;width:80px;text-align:center;left:1288.300px;transform:scaleX(1.160);">6</div>
<div class="t" style="left:1391.6px;top:681.00px;font-size:15.2px;line-height:20px;letter-spacing:0.756px;color:#0a0a0a;-webkit-text-stroke:.8px #0a0a0a;">PR-000071 - Nozzle Clogging</div>
<div class="t" style="left:1391.6px;top:705.00px;font-size:12.5px;line-height:16px;letter-spacing:0.119px;color:#1c1c1c;-webkit-text-stroke:.2px #1c1c1c;">Printer nozzles frequently clog, needing manual cleaning.</div>
<div class="t" style="left:1407.6px;top:722.00px;font-size:12.5px;line-height:16px;letter-spacing:0.076px;color:#1c1c1c;-webkit-text-stroke:.2px #1c1c1c;">Quality Problem</div>
<div class="t" style="left:1526.0px;top:722.00px;font-size:12.5px;line-height:16px;letter-spacing:-0.070px;color:#1c1c1c;-webkit-text-stroke:.2px #1c1c1c;">Customer</div>
<div class="t" style="top:772.00px;font-size:29.8px;line-height:39px;font-weight:bold;color:#000;-webkit-text-stroke:1.200px #000;width:80px;text-align:center;left:1288.300px;transform:scaleX(1.160);">7</div>
<div class="t" style="left:1391.6px;top:763.00px;font-size:15.2px;line-height:20px;letter-spacing:0.898px;color:#0a0a0a;-webkit-text-stroke:.8px #0a0a0a;">PR-000072 - Chiller Not Cooling Efficiently</div>
<div class="t" style="left:1391.6px;top:787.00px;font-size:12.5px;line-height:16px;letter-spacing:0.205px;color:#1c1c1c;-webkit-text-stroke:.2px #1c1c1c;">The chiller is not maintaining the required temperature.</div>
<div class="t" style="left:1407.6px;top:804.00px;font-size:12.5px;line-height:16px;letter-spacing:0.053px;color:#1c1c1c;-webkit-text-stroke:.2px #1c1c1c;">Functional Problem</div>
<div class="t" style="left:1544.6px;top:804.00px;font-size:12.5px;line-height:16px;letter-spacing:-0.077px;color:#1c1c1c;-webkit-text-stroke:.2px #1c1c1c;">Services</div>
<div class="t" style="top:854.00px;font-size:29.8px;line-height:39px;font-weight:bold;color:#000;-webkit-text-stroke:1.200px #000;width:80px;text-align:center;left:1288.300px;transform:scaleX(1.160);">8</div>
<div class="t" style="left:1391.6px;top:845.00px;font-size:15.2px;line-height:20px;letter-spacing:0.816px;color:#0a0a0a;-webkit-text-stroke:.8px #0a0a0a;">PR-000073 - High Noise Levels</div>
<div class="t" style="left:1391.6px;top:869.00px;font-size:12.5px;line-height:16px;letter-spacing:0.078px;color:#1c1c1c;-webkit-text-stroke:.2px #1c1c1c;">The chiller produces excessive noise during operation.</div>
<div class="t" style="left:1407.6px;top:886.00px;font-size:12.5px;line-height:16px;letter-spacing:0.009px;color:#1c1c1c;-webkit-text-stroke:.2px #1c1c1c;">Mechanical Problem</div>
<div class="t" style="left:1549.4px;top:886.00px;font-size:12.5px;line-height:16px;letter-spacing:-0.070px;color:#1c1c1c;-webkit-text-stroke:.2px #1c1c1c;">Customer</div>
<div class="t" style="top:936.00px;font-size:29.8px;line-height:39px;font-weight:bold;color:#000;-webkit-text-stroke:1.200px #000;width:80px;text-align:center;left:1288.300px;transform:scaleX(1.160);">9</div>
<div class="t" style="left:1391.6px;top:927.00px;font-size:15.2px;line-height:20px;letter-spacing:0.766px;color:#0a0a0a;-webkit-text-stroke:.8px #0a0a0a;">PR-000074 - Frequent Cycling On and Off</div>
<div class="t" style="left:1391.6px;top:951.00px;font-size:12.5px;line-height:16px;letter-spacing:0.450px;color:#1c1c1c;-webkit-text-stroke:.2px #1c1c1c;">The chiller turns on and off too frequently.</div>
<div class="t" style="left:1407.6px;top:968.00px;font-size:12.5px;line-height:16px;letter-spacing:0.053px;color:#1c1c1c;-webkit-text-stroke:.2px #1c1c1c;">Functional Problem</div>
<div class="t" style="left:1544.6px;top:968.00px;font-size:12.5px;line-height:16px;letter-spacing:-0.070px;color:#1c1c1c;-webkit-text-stroke:.2px #1c1c1c;">Customer</div>
</div>

<div class="t" style="left:157.3px;top:14.00px;font-size:14.2px;line-height:18px;letter-spacing:0.431px;color:#1f1f1f;-webkit-text-stroke:.2px #1f1f1f;">localhost:8080/service?type=assets</div>
<div class="t" style="left:138.6px;top:66.00px;font-size:21px;line-height:27px;font-weight:bold;letter-spacing:0.702px;color:#fff;-webkit-text-stroke:.8px #fff;">Services Portal</div>
<div class="t" style="left:50.8px;top:147.00px;font-size:17.5px;line-height:23px;letter-spacing:0.640px;color:#000;-webkit-text-stroke:.7px #000;">Pending Asset Services</div>
<div class="t" style="left:522.2px;top:147.00px;font-size:17.5px;line-height:23px;letter-spacing:0.846px;color:#000;-webkit-text-stroke:.7px #000;">Projects / Facilities</div>
<div class="t" style="left:522.2px;top:446.00px;font-size:17.5px;line-height:23px;letter-spacing:0.623px;color:#000;-webkit-text-stroke:.7px #000;">Assets of P0003 - TI San Francisco</div>
<div class="t" style="left:1327.4px;top:146.00px;font-size:18.4px;line-height:24px;letter-spacing:0.016px;color:#111;-webkit-text-stroke:.2px #111;">Spare Part Requests</div>
<div class="t" style="left:1592.1px;top:147.00px;font-size:18px;line-height:23px;letter-spacing:0.488px;color:#000;-webkit-text-stroke:.7px #000;">Problem Reports</div>
<div class="t" style="left:1017.4px;top:149.00px;font-size:13.2px;line-height:17px;letter-spacing:0.081px;color:#8c8c8c;-webkit-text-stroke:.2px #8c8c8c;">Search</div>
<div class="t" style="left:1059.4px;top:448.00px;font-size:13.2px;line-height:17px;letter-spacing:0.081px;color:#8c8c8c;-webkit-text-stroke:.2px #8c8c8c;">Search</div>
<div class="t" style="left:1551.5px;top:219.00px;font-size:13.2px;line-height:17px;letter-spacing:0.041px;color:#8c8c8c;-webkit-text-stroke:.2px #8c8c8c;">Search</div>
<div class="t" style="left:81.6px;top:204.00px;font-size:14.2px;line-height:18px;letter-spacing:0.146px;color:#1c1c1c;-webkit-text-stroke:.2px #1c1c1c;">A000002-SRV001 - Regular Service</div>
<div class="t" style="left:81.6px;top:240.00px;font-size:14.2px;line-height:18px;letter-spacing:0.211px;color:#1c1c1c;-webkit-text-stroke:.2px #1c1c1c;">P0001-01-SRV001 - Asset Not Operational</div>
<div class="t" style="left:81.6px;top:276.00px;font-size:14.2px;line-height:18px;letter-spacing:0.173px;color:#1c1c1c;-webkit-text-stroke:.2px #1c1c1c;">P0003-02-SRV001 - Expected Asset Failure</div>
<svg class="abs" style="left:0;top:0" width="1821" height="959" viewBox="0 0 1821 959">
<path d="M0 0H6.500Q0 0 0 6.500Z" fill="#dbe4fb"/><path d="M1821 0H1817.500Q1821 0 1821 3.500Z" fill="#dbe4fb"/>
<path d="M0 936Q0 959 11 959H0Z" fill="#bcbcbc"/><path d="M1821 950 1812 959H1821Z" fill="#4a4a4a"/><path d="M1821 948.500 1810.500 959" stroke="#fff" stroke-width="1.200" fill="none"/>
</svg>

</div>
</body>
</html>
